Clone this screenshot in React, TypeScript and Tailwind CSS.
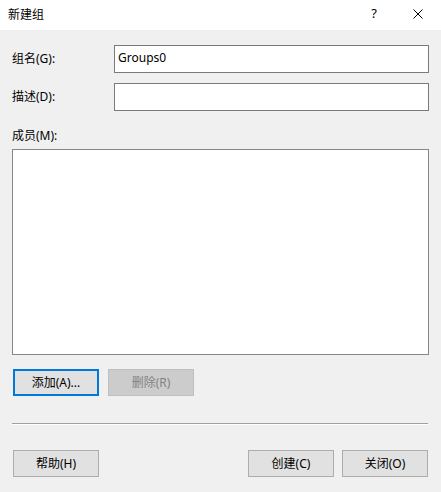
import React from "react";

const font = {
  fontFamily: '"Segoe UI", "Noto Sans", "Noto Sans CJK SC", sans-serif',
};

function Btn({
  children,
  focused,
  disabled,
}: {
  children: React.ReactNode;
  focused?: boolean;
  disabled?: boolean;
}) {
  const base =
    "w-[86px] h-[27px] flex items-center justify-center text-[12px] leading-none";
  if (disabled)
    return (
      <div className={`${base} bg-[#cccccc] border border-[#bfbfbf] text-[#838383]`}>
        {children}
      </div>
    );
  if (focused)
    return (
      <div className={`${base} bg-[#e1e1e1] border-2 border-[#0078d7] text-black`}>
        {children}
      </div>
    );
  return (
    <div className={`${base} bg-[#e1e1e1] border border-[#adadad] text-black`}>
      {children}
    </div>
  );
}

export default function App() {
  return (
    <div
      className="w-[441px] h-[492px] bg-[#f0f0f0] flex flex-col overflow-hidden text-black"
      style={font}
    >
      {/* Title bar */}
      <div className="h-[30px] bg-white flex items-center shrink-0">
        <span className="ml-[8px] text-[12px]">新建组</span>
        <span className="ml-auto mr-[36px] text-[13px] mb-[2px]">?</span>
        <svg width="10" height="10" viewBox="0 0 10 10" className="mr-[18px] mb-[2px]">
          <path d="M0.5 0.5 L9.5 9.5 M9.5 0.5 L0.5 9.5" stroke="#000" strokeWidth="1" />
        </svg>
      </div>

      <div className="flex flex-col px-[12px]">
        {/* Name */}
        <div className="flex items-center mt-[15px] h-[28px]">
          <span className="w-[102px] text-[12px]">组名(G):</span>
          <div className="w-[315px] h-[28px] bg-white border border-[#7a7a7a] pl-[3px] pt-[3px] text-[12px]">
            Groups0
          </div>
        </div>
        {/* Description */}
        <div className="flex items-center mt-[10px] h-[28px]">
          <span className="w-[102px] text-[12px]">描述(D):</span>
          <div className="w-[315px] h-[28px] bg-white border border-[#7a7a7a]" />
        </div>
        {/* Members */}
        <div className="mt-[17px] h-[15px] flex items-center text-[12px]">成员(M):</div>
        <div className="mt-[6px] w-[417px] h-[206px] bg-white border border-[#828790]" />

        <div className="flex gap-[9px] mt-[14px] ml-px">
          <Btn focused>添加(A)...</Btn>
          <Btn disabled>删除(R)</Btn>
        </div>

        {/* Separator */}
        <div className="mt-[27px] w-[416px] border-t border-[#a0a0a0] border-b border-b-white" />

        <div className="flex mt-[25px] ml-px">
          <Btn>帮助(H)</Btn>
          <div className="ml-auto flex gap-[8px] mr-[1px]">
            <Btn>创建(C)</Btn>
            <Btn>关闭(O)</Btn>
          </div>
        </div>
      </div>
    </div>
  );
}
